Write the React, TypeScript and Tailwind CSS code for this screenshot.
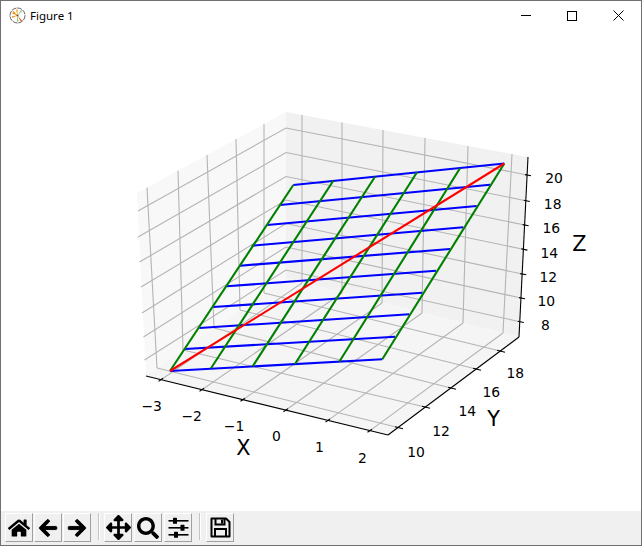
import React from "react";
import { FaHome, FaArrowLeft, FaArrowRight, FaArrowsAlt, FaSearch } from "react-icons/fa";

type P = [number, number];

const xTicks: P[] = [[161, 379.7], [202, 389.7], [243, 399.6], [286, 410], [328, 420.4], [370, 430.6]];
const rightFloor: P[] = [[302, 283], [342, 293], [382, 303], [422, 313], [463, 323], [503, 333]];
const rightTop: P[] = [[302, 115], [342, 122.4], [383, 130], [425, 138], [468, 146], [512, 154]];
const yTicks: P[] = [[398, 427.5], [425, 407], [451, 388], [476, 369], [500, 351]];
const leftFloor: P[] = [[157, 368], [183, 350], [214, 328], [240, 310], [264, 293]];
const leftTop: P[] = [[147, 187.6], [178, 170.8], [207, 155], [236, 139], [264, 124]];
const zRight: P[] = [[527, 175], [525.8, 200.7], [524.6, 225], [523.4, 249.3], [522.2, 274], [521, 298], [519.8, 321.7]];
const zBack = [128, 152.5, 176.5, 200, 223.5, 247, 270];
const zLeft: P[] = [[138, 211], [138, 237], [139.5, 262], [141, 287], [142, 313], [143.5, 337], [144.5, 360]];

const greens: [P, P][] = [
  [[170, 371], [293.3, 185]],
  [[211, 368.3], [333.3, 180.7]],
  [[252.7, 366.3], [375, 176.7]],
  [[295, 364], [417, 172.3]],
  [[339.3, 361.7], [460, 168.3]],
  [[382.3, 359.3], [504.3, 163.5]],
];
const blueL: P[] = [[170, 371], [185, 349], [199.3, 328], [213.3, 307], [226.7, 286.3], [240, 265.7], [251.7, 245.7], [267.3, 225], [280, 205], [293.3, 185]];
const blueR: P[] = [[382.3, 359.3], [395, 336.7], [409.3, 314.3], [422.3, 292.7], [436, 270.7], [450, 249], [463.3, 227.3], [476.7, 206], [490, 184.7], [504.3, 163.5]];

const labels: [string, number, number][] = [
  ["−3", 151.7, 405.7], ["−2", 191.7, 416.3], ["−1", 234, 426], ["0", 276.3, 436], ["1", 319.3, 447], ["2", 362.3, 458],
  ["10", 416, 452], ["12", 441, 431], ["14", 467.3, 411.3], ["16", 491.3, 392.3], ["18", 515.3, 373.3],
  ["20", 554, 178.3], ["18", 552.7, 204.3], ["16", 551.3, 228.3], ["14", 549.3, 253.3], ["12", 548.3, 277.3], ["10", 546.3, 301.3], ["8", 545.3, 325],
];

function Seg({ a, b, c, w = 1.1 }: { a: P; b: P; c: string; w?: number }) {
  return <line x1={a[0]} y1={a[1]} x2={b[0]} y2={b[1]} stroke={c} strokeWidth={w} />;
}

function Plot() {
  const grid = "#b4b4b4";
  return (
    <svg width={640} height={481} viewBox="1 30 640 481" className="block">
      <polygon points="137,193 286,112 286,278 146,376" fill="#f8f8f8" />
      <polygon points="286,112 528,157 519,337 286,278" fill="#f1f1f1" />
      <polygon points="146,376 286,278 519,337 388,435" fill="#f5f5f5" />
      {rightTop.map((p, i) => <Seg key={"a" + i} a={p} b={rightFloor[i]} c={grid} />)}
      {xTicks.map((p, i) => <Seg key={"b" + i} a={p} b={rightFloor[i]} c={grid} />)}
      {leftTop.map((p, i) => <Seg key={"c" + i} a={p} b={leftFloor[i]} c={grid} />)}
      {yTicks.map((p, i) => <Seg key={"d" + i} a={p} b={leftFloor[i]} c={grid} />)}
      {zRight.map((p, i) => (
        <polyline key={"e" + i} points={`${zLeft[i][0]},${zLeft[i][1]} 286,${zBack[i]} ${p[0]},${p[1]}`} fill="none" stroke={grid} strokeWidth={1.1} />
      ))}
      <Seg a={[146, 376]} b={[388, 435]} c="#000" w={1.1} />
      <Seg a={[388, 435]} b={[519, 337]} c="#000" w={1.1} />
      <Seg a={[519, 337]} b={[528, 157]} c="#000" w={1.1} />
      {xTicks.map((p, i) => <Seg key={"f" + i} a={[p[0] - 2.5, p[1] + 1.7]} b={[p[0] + 2, p[1] - 1.4]} c="#000" />)}
      {yTicks.map((p, i) => <Seg key={"g" + i} a={[p[0] - 3, p[1] - 0.75]} b={[p[0] + 5, p[1] + 1.25]} c="#000" />)}
      {zRight.map((p, i) => <Seg key={"h" + i} a={[p[0] - 2, p[1] - 0.4]} b={[p[0] + 4, p[1] + 0.8]} c="#000" />)}
      {blueL.map((p, i) => <Seg key={"i" + i} a={p} b={blueR[i]} c="#0000ff" w={2.1} />)}
      {greens.map(([a, b], i) => <Seg key={"j" + i} a={a} b={b} c="#008000" w={2.1} />)}
      <Seg a={[170, 371]} b={[504.3, 163.5]} c="#ff0000" w={2.1} />
      {labels.map(([t, x, y], i) => (
        <text key={"k" + i} x={x} y={y + 5} textAnchor="middle" fill="#000" className="font-['DejaVu_Sans',sans-serif] text-[13.9px]">{t}</text>
      ))}
      <text x={243.3} y={454.5} textAnchor="middle" fill="#000" className="font-['DejaVu_Sans',sans-serif] text-[20.8px]">X</text>
      <text x={493.7} y={425.5} textAnchor="middle" fill="#000" className="font-['DejaVu_Sans',sans-serif] text-[20.8px]">Y</text>
      <text x={579.3} y={251} textAnchor="middle" fill="#000" className="font-['DejaVu_Sans',sans-serif] text-[20.8px]">Z</text>
    </svg>
  );
}

function Logo() {
  return (
    <svg width={17} height={17} viewBox="0 0 17 17" className="shrink-0">
      <circle cx={8.5} cy={8.5} r={7.5} fill="#fff" stroke="#666" strokeWidth={1} strokeDasharray="5 0.8" />
      <path d="M8.5 8.5 L13.5 14 L12 15 Z" fill="#e8642c" />
      <path d="M8.5 8.5 L3 6.5 L4.5 3.8 Z" fill="#f29a1e" />
      <path d="M8.5 8.5 L3.5 11 L2.6 9 Z" fill="#f2a83c" />
      <path d="M8.5 8.5 L12 3 L13.2 4 Z" fill="#8cc56a" />
      <path d="M8.5 8.5 L7.8 14.5 L9.6 14.5 Z" fill="#8cc56a" />
      <path d="M8.5 8.5 L7 2.8 L8.6 2.4 Z" fill="#f29a1e" />
      <circle cx={8.5} cy={8.5} r={1.1} fill="#6b5a2c" />
    </svg>
  );
}

function Btn({ children }: { children: React.ReactNode }) {
  return (
    <div className="flex h-[29px] w-[28px] items-center justify-center border border-t-white border-l-white border-r-[#a0a0a0] border-b-[#a0a0a0] bg-[#f0f0f0] text-black">
      {children}
    </div>
  );
}

function Sliders() {
  return (
    <svg width={21} height={21} viewBox="0 0 21 21">
      <g fill="#000">
        <rect x={0.5} y={3} width={20} height={1.6} />
        <rect x={0.5} y={10} width={20} height={1.6} />
        <rect x={0.5} y={17} width={20} height={1.6} />
        <rect x={5} y={0.8} width={4} height={6} rx={0.6} />
        <rect x={12.5} y={7.8} width={4} height={6} rx={0.6} />
        <rect x={6} y={14.8} width={4} height={6} rx={0.6} />
      </g>
    </svg>
  );
}

function Save() {
  return (
    <svg width={21} height={21} viewBox="0 0 21 21">
      <path d="M1.5 1.5 H16 L19.5 5 V19.5 H1.5 Z" fill="none" stroke="#000" strokeWidth={2} strokeLinejoin="round" />
      <path d="M5.5 1.5 V7.5 H14.5 V1.5" fill="none" stroke="#000" strokeWidth={2} />
      <rect x={11} y={2.5} width={2} height={4} fill="#000" />
      <path d="M5 19.5 V12 H16 V19.5" fill="none" stroke="#000" strokeWidth={2} />
    </svg>
  );
}

function Sep() {
  return <div className="ml-[7px] mr-[4px] h-[27px] w-[2px] border-l border-l-[#c4c4c4] border-r border-r-white" />;
}

export default function App() {
  return (
    <div className="flex h-[546px] w-[642px] flex-col overflow-hidden border border-[#707070] bg-white font-['Noto_Sans',sans-serif]">
      <div className="flex h-[29px] shrink-0 items-center bg-white pl-[8px]">
        <Logo />
        <span className="ml-[4px] text-[11.5px] text-black">Figure 1</span>
        <div className="ml-auto flex items-center">
          <div className="flex h-[29px] w-[46px] items-center justify-center">
            <div className="h-px w-[10px] bg-black" />
          </div>
          <div className="flex h-[29px] w-[46px] items-center justify-center">
            <div className="h-[10px] w-[10px] border border-black" />
          </div>
          <div className="flex h-[29px] w-[46px] items-center justify-center">
            <svg width={11} height={11} viewBox="0 0 11 11"><path d="M0.5 0.5 L10.5 10.5 M10.5 0.5 L0.5 10.5" stroke="#000" strokeWidth={1} /></svg>
          </div>
        </div>
      </div>
      <div className="flex-1">
        <Plot />
      </div>
      <div className="flex h-[34px] shrink-0 items-start bg-[#f0f0f0] pl-[4px] pt-[2px]">
        <div className="flex gap-[1px]">
          <Btn><FaHome size={22} /></Btn>
          <Btn><FaArrowLeft size={20} stroke="currentColor" strokeWidth={24} /></Btn>
          <Btn><FaArrowRight size={20} stroke="currentColor" strokeWidth={24} /></Btn>
        </div>
        <Sep />
        <div className="flex gap-[2px]">
          <Btn><FaArrowsAlt size={25} /></Btn>
          <Btn><FaSearch size={22} /></Btn>
          <Btn><Sliders /></Btn>
        </div>
        <Sep />
        <div className="ml-[1px]">
          <Btn><Save /></Btn>
        </div>
      </div>
    </div>
  );
}
